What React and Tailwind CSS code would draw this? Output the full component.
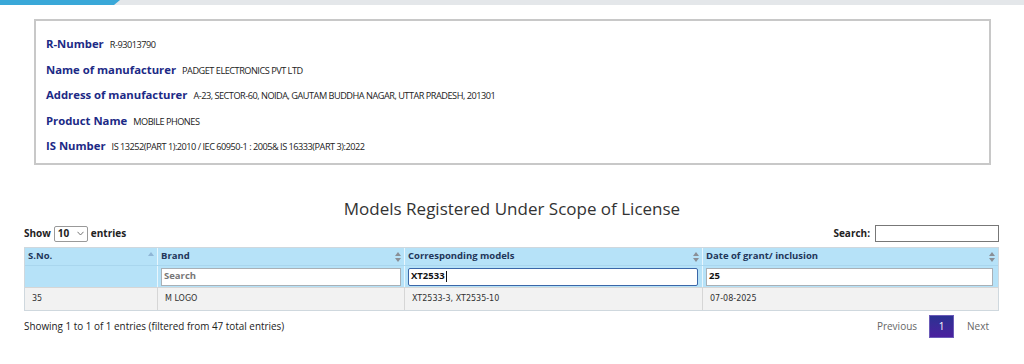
import React from "react";

const Sort = ({ up }) => (
  <svg width="6" height="10" viewBox="0 0 6 10" className="shrink-0">
    <path d="M3 0 L6 4 L0 4 Z" fill={up ? "#8fb6d6" : "#8a8f96"} />
    {!up && <path d="M3 10 L6 6 L0 6 Z" fill="#8a8f96" />}
  </svg>
);

const rows = [
  ["R-Number", "R-93013790"],
  ["Name of manufacturer", "PADGET ELECTRONICS PVT LTD"],
  ["Address of manufacturer", "A-23, SECTOR-60, NOIDA, GAUTAM BUDDHA NAGAR, UTTAR PRADESH, 201301"],
  ["Product Name", "MOBILE PHONES"],
  ["IS Number", "IS 13252(PART 1):2010 / IEC 60950-1 : 2005& IS 16333(PART 3):2022"],
];

export default function App() {
  return (
    <div className="w-[1024px] h-[364px] bg-white overflow-hidden font-['Open_Sans',sans-serif] text-[#222]">
      <div className="h-[5px] bg-[#e4e7ea] relative">
        <div className="absolute left-0 top-0 h-full w-[120px] bg-[#3aa8d8] [clip-path:polygon(0_0,100%_0,95%_100%,0_100%)]" />
      </div>

      <div className="ml-[34px] mt-[14px] w-[957px] h-[146px] border-2 border-[#c8c8c8] pl-[10px] pt-[10px]">
        {rows.map(([k, v]) => (
          <div key={k} className="h-[25.5px] flex items-baseline gap-[6px]">
            <span className="text-[11.3px] font-bold text-[#1c2a86] leading-[25px]">{k}</span>
            <span className="text-[9.2px] tracking-[-0.5px] text-[#222]">{v}</span>
          </div>
        ))}
      </div>

      <div className="mt-[32px] text-center text-[17px] leading-[24px] text-[#333]">
        Models Registered Under Scope of License
      </div>

      <div className="mx-[24px] w-[975px]">
        <div className="flex items-center justify-between h-[19px] mt-[3px] text-[10px] font-bold text-[#222]">
          <div className="flex items-center gap-[3px]">
            <span>Show</span>
            <div className="w-[34px] h-[16px] border border-[#999] rounded-[2px] flex items-center justify-between px-[3px] bg-white">
              <span>10</span>
              <svg width="7" height="5" viewBox="0 0 7 5"><path d="M0.5 0.8 L3.5 4 L6.5 0.8" fill="none" stroke="#666" strokeWidth="0.9" /></svg>
            </div>
            <span>entries</span>
          </div>
          <div className="flex items-center gap-[5px]">
            <span>Search:</span>
            <div className="w-[124px] h-[17px] border border-[#777] bg-white" />
          </div>
        </div>

        <div className="mt-[4px] border border-[#cfd8de]">
          <div className="grid grid-cols-[133px_247px_298px_295px] bg-[#b6e2f8] text-[9.5px] font-bold text-[#22365a]">
            <div className="h-[17px] flex items-center justify-between px-[3px] border-r border-[#e8f6fd]"><span>S.No.</span><Sort up /></div>
            <div className="h-[17px] flex items-center justify-between px-[3px] border-r border-[#e8f6fd]"><span>Brand</span><Sort /></div>
            <div className="h-[17px] flex items-center justify-between px-[3px] border-r border-[#e8f6fd]"><span>Corresponding models</span><Sort /></div>
            <div className="h-[17px] flex items-center justify-between px-[3px]"><span>Date of grant/ inclusion</span><Sort /></div>
          </div>
          <div className="grid grid-cols-[133px_247px_298px_295px] bg-[#b6e2f8] border-t border-[#a9d6ee] h-[22px] items-center text-[9.5px] font-bold">
            <div className="h-full border-r border-[#e8f6fd]" />
            <div className="h-full flex items-center px-[3px] border-r border-[#e8f6fd]">
              <div className="w-full h-[18px] bg-white border border-[#a9b0b6] flex items-center px-[2px] text-[#777]">Search</div>
            </div>
            <div className="h-full flex items-center px-[3px] border-r border-[#e8f6fd]">
              <div className="w-[290px] h-[18px] bg-white border-[1.5px] border-[#3b67a8] rounded-[2px] flex items-center px-[2px] text-[#111]">XT2533<span className="w-px h-[11px] bg-[#111] ml-px" /></div>
            </div>
            <div className="h-full flex items-center px-[3px]">
              <div className="w-[287px] h-[18px] bg-white border border-[#a9b0b6] flex items-center px-[2px] text-[#111]">25</div>
            </div>
          </div>
          <div className="grid grid-cols-[133px_247px_298px_295px] bg-[#f2f2f2] border-t border-[#d6d6d6] h-[23px] items-center text-[8px] text-[#333] font-['DejaVu_Sans',sans-serif]">
            <div className="h-full flex items-center px-[7px] border-r border-[#d6d6d6]">35</div>
            <div className="h-full flex items-center px-[7px] border-r border-[#d6d6d6]">M LOGO</div>
            <div className="h-full flex items-center px-[7px] border-r border-[#d6d6d6]">XT2533-3, XT2535-10</div>
            <div className="h-full flex items-center px-[7px]">07-08-2025</div>
          </div>
        </div>

        <div className="flex items-center justify-between mt-[3px] h-[24px]">
          <span className="text-[9.9px] text-[#222]">Showing 1 to 1 of 1 entries (filtered from 47 total entries)</span>
          <div className="flex items-center text-[10px] text-[#666] mr-[10px]">
            <span className="px-[12px]">Previous</span>
            <span className="w-[25px] h-[23px] flex items-center justify-center text-white bg-gradient-to-b from-[#2a3192] to-[#4a1f9e] border border-[#6b5bb8]">1</span>
            <span className="pl-[13px]">Next</span>
          </div>
        </div>
      </div>
    </div>
  );
}
